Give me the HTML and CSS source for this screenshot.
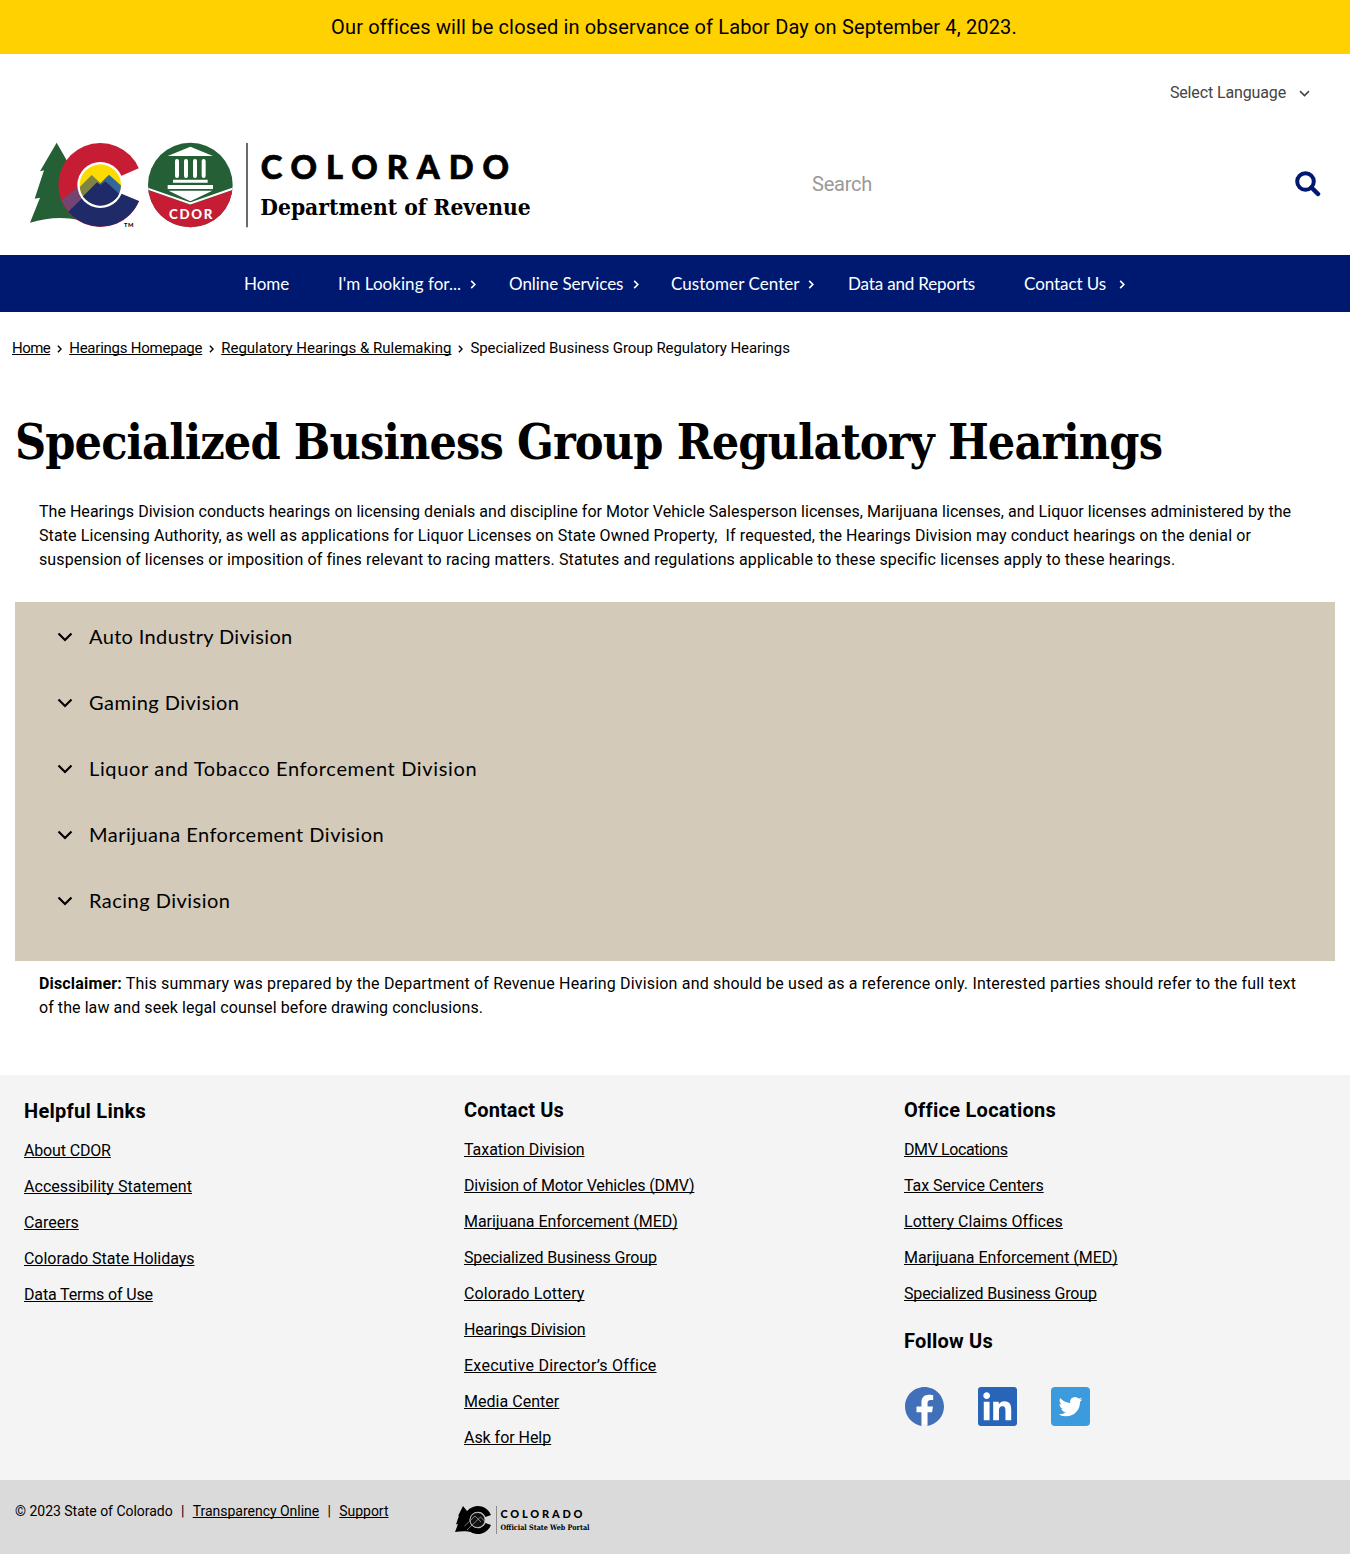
FILE: index.html
```html
<!DOCTYPE html>
<html lang="en">
<head>
<meta charset="utf-8">
<title>Specialized Business Group Regulatory Hearings | Department of Revenue</title>
<link rel="stylesheet" href="styles.css">
</head>
<body>
<svg width="0" height="0" class="defs" aria-hidden="true">
  <symbol id="right" viewBox="0 0 6 10"><path d="M1 1l4 4-4 4" fill="none" stroke="currentColor" stroke-width="1.8"/></symbol>
  <symbol id="down" viewBox="0 0 16 10"><path d="M1.5 1.5L8 8l6.500-6.500" fill="none" stroke="currentColor" stroke-width="2.200"/></symbol>
</svg>

<div class="alert">Our offices will be closed in observance of Labor Day on September 4, 2023.</div>

<header class="header">
  <div class="language"><span>Select Language</span><svg class="language-icon"><use href="#down"/></svg></div>
  <div class="brand-row">
    <svg class="logo" viewBox="30 36 1506 264" role="img" aria-label="Colorado Department of Revenue">
      <path fill="#245f36" d="M110 38L141 92 150 240 178 270C132 260 82 262 30 278L60 203 44 206 72 121 60 124Z"/>
      <circle cx="241" cy="165" r="126" fill="#c61d34"/>
      <path fill="#744573" d="M124 211L182 166 200 200 146 244A126 126 0 0 1 124 211Z"/>
      <path fill="#1f2a69" d="M145 245L214 178 300 183 357 213A126 126 0 0 1 145 245Z"/>
      <path fill="#fff" d="M241 165L370 109V218Z"/>
      <circle cx="241" cy="165" r="69" fill="#fff"/>
      <clipPath id="disc"><circle cx="241" cy="165" r="62"/></clipPath>
      <g clip-path="url(#disc)">
        <path fill="#fedb00" d="M170 90h140v140H170z"/>
        <path fill="#336799" d="M230 170L267 134 320 182V215H240Z"/>
        <path fill="#7f8442" d="M165 185L215 135 242 160 180 215Z"/>
        <path fill="#1f2a69" d="M178 210L231 157 242 165 256 154 310 203V240H178Z"/>
      </g>
      <text x="312" y="291" class="logo-sans" font-size="17" textLength="28">TM</text>

      <clipPath id="seal"><circle cx="511" cy="165" r="127"/></clipPath>
      <g clip-path="url(#seal)">
        <path fill="#245f36" d="M380 30h262v270H380z"/>
        <path fill="#c61d34" d="M380 178L511 224 642 178V300H380Z"/>
        <path fill="none" stroke="#fff" stroke-width="6" d="M380 175L511 220 642 175"/>
      </g>
      <path fill="#fff" d="M511 50L579 78H443ZM443 165H579V177H443ZM446 182H577L511 214Z"/>
      <path stroke="#fff" stroke-width="12" stroke-linecap="round" d="M471 93V138M498 93V138M525 93V138M551 93V138"/>
      <path stroke="#fff" stroke-width="9" d="M459 154H563"/>
      <text x="447" y="266" class="logo-sans white" font-size="40" textLength="130">CDOR</text>

      <path stroke="#222" stroke-width="4" d="M681 39V292"/>
      <text x="722" y="147" class="logo-sans name" font-size="98" textLength="745">COLORADO</text>
      <text x="721" y="255" class="logo-slab" font-size="66" textLength="811" lengthAdjust="spacingAndGlyphs">Department of Revenue</text>
    </svg>
    <div class="search">
      <span>Search</span>
      <svg class="search-icon" viewBox="0 0 26 26"><circle cx="10.500" cy="10.500" r="8.300" fill="none" stroke="#001970" stroke-width="4"/><path d="M16.500 16.500L23 23" stroke="#001970" stroke-width="4.500" stroke-linecap="round"/></svg>
    </div>
  </div>
</header>

<nav class="nav">
  <ul class="nav-list">
    <li>Home</li>
    <li class="wide">I'm Looking for...<svg><use href="#right"/></svg></li>
    <li class="online">Online Services<svg><use href="#right"/></svg></li>
    <li class="customer">Customer Center<svg><use href="#right"/></svg></li>
    <li class="tight">Data and Reports</li>
    <li>Contact Us<svg><use href="#right"/></svg></li>
  </ul>
</nav>

<div class="crumbs">
  <a class="crumb-home">Home</a><svg><use href="#right"/></svg><a class="crumb-tight">Hearings Homepage</a><svg><use href="#right"/></svg><a>Regulatory Hearings &amp; Rulemaking</a><svg><use href="#right"/></svg><span class="crumb-current">Specialized Business Group Regulatory Hearings</span>
</div>

<main class="main">
  <h1>Specialized Business Group Regulatory Hearings</h1>
  <p class="intro">The Hearings Division conducts hearings on licensing denials and discipline for Motor Vehicle Salesperson licenses, Marijuana licenses, and Liquor licenses administered by the<br><span class="loose">State Licensing Authority, as well as applications for Liquor Licenses on State Owned Property,&nbsp; If requested, the Hearings Division may conduct hearings on the denial or<br>suspension of licenses or imposition of fines relevant to racing matters. Statutes and regulations applicable to these specific licenses apply to these hearings.</span></p>
  <div class="accordion">
    <div class="item"><svg><use href="#down"/></svg><span class="auto">Auto Industry Division</span></div>
    <div class="item"><svg><use href="#down"/></svg><span>Gaming Division</span></div>
    <div class="item looser"><svg><use href="#down"/></svg><span>Liquor and Tobacco Enforcement Division</span></div>
    <div class="item"><svg><use href="#down"/></svg><span>Marijuana Enforcement Division</span></div>
    <div class="item"><svg><use href="#down"/></svg><span>Racing Division</span></div>
  </div>
  <p class="disclaimer"><strong>Disclaimer:</strong> This summary was prepared by the Department of Revenue Hearing Division and should be used as a reference only. Interested parties should refer to the full text<br><span class="loose">of the law and seek legal counsel before drawing conclusions.</span></p>
</main>

<footer class="footer">
  <section class="first">
    <h2>Helpful Links</h2>
    <ul>
      <li><a class="tight">About CDOR</a></li>
      <li><a class="open">Accessibility Statement</a></li>
      <li><a>Careers</a></li>
      <li><a>Colorado State Holidays</a></li>
      <li><a class="tight">Data Terms of Use</a></li>
    </ul>
  </section>
  <section>
    <h2 class="snug">Contact Us</h2>
    <ul>
      <li><a>Taxation Division</a></li>
      <li><a class="tight">Division of Motor Vehicles (DMV)</a></li>
      <li><a>Marijuana Enforcement (MED)</a></li>
      <li><a class="tight">Specialized Business Group</a></li>
      <li><a class="lottery">Colorado Lottery</a></li>
      <li><a class="tight">Hearings Division</a></li>
      <li><a class="director">Executive Director’s Office</a></li>
      <li><a class="open">Media Center</a></li>
      <li><a>Ask for Help</a></li>
    </ul>
  </section>
  <section>
    <h2>Office Locations</h2>
    <ul>
      <li><a class="dmv">DMV Locations</a></li>
      <li><a>Tax Service Centers</a></li>
      <li><a class="open">Lottery Claims Offices</a></li>
      <li><a>Marijuana Enforcement (MED)</a></li>
      <li><a class="tight">Specialized Business Group</a></li>
    </ul>
    <h2 class="follow">Follow Us</h2>
    <div class="social">
      <svg viewBox="0 0 24 24"><circle cx="12" cy="12" r="11" fill="#fff"/><path fill="#4170b9" d="M24 12.073c0-6.627-5.373-12-12-12s-12 5.373-12 12c0 5.990 4.388 10.954 10.125 11.854v-8.385H7.078v-3.470h3.047V9.430c0-3.007 1.792-4.669 4.533-4.669 1.312 0 2.686.235 2.686.235v2.953H15.830c-1.491 0-1.956.925-1.956 1.874v2.250h3.328l-.532 3.470h-2.796v8.385C19.612 23.027 24 18.062 24 12.073z"/></svg>
      <svg viewBox="0 0 24 24"><path fill="#fff" d="M2 2h20v20H2z"/><path fill="#2864b7" d="M20.447 20.452h-3.554v-5.569c0-1.328-.027-3.037-1.852-3.037-1.853 0-2.136 1.445-2.136 2.939v5.667H9.351V9h3.414v1.561h.046c.477-.9 1.637-1.850 3.370-1.850 3.601 0 4.267 2.370 4.267 5.455v6.286zM5.337 7.433c-1.144 0-2.063-.926-2.063-2.065 0-1.138.92-2.063 2.063-2.063 1.140 0 2.064.925 2.064 2.063 0 1.139-.925 2.065-2.064 2.065zm1.782 13.019H3.555V9h3.564v11.452zM22.225 0H1.771C.792 0 0 .774 0 1.729v20.542C0 23.227.792 24 1.771 24h20.451C23.200 24 24 23.227 24 22.271V1.729C24 .774 23.200 0 22.222 0h.003z"/></svg>
      <svg viewBox="0 0 24 24"><rect width="24" height="24" rx="2.500" fill="#3b9bdc"/><path fill="#fff" transform="translate(4.700 4.800) scale(.61)" d="M23.953 4.570a10 10 0 01-2.825.775 4.958 4.958 0 002.163-2.723c-.951.555-2.005.959-3.127 1.184a4.920 4.920 0 00-8.384 4.482C7.690 8.095 4.067 6.130 1.640 3.162a4.822 4.822 0 00-.666 2.475c0 1.710.870 3.213 2.188 4.096a4.904 4.904 0 01-2.228-.616v.06a4.923 4.923 0 003.946 4.827 4.996 4.996 0 01-2.212.085 4.936 4.936 0 004.604 3.417 9.867 9.867 0 01-6.102 2.105c-.39 0-.779-.023-1.170-.067a13.995 13.995 0 007.557 2.209c9.053 0 13.998-7.496 13.998-13.985 0-.21 0-.42-.015-.63A9.935 9.935 0 0024 4.590z"/></svg>
    </div>
  </section>
</footer>

<div class="legal">
  <div class="legal-links"><span>© 2023 State of Colorado</span><i>|</i><a>Transparency Online</a><i>|</i><a>Support</a></div>
  <svg class="portal" viewBox="0 0 140 30" role="img" aria-label="Colorado Official State Web Portal">
    <path d="M8 1l4 5 1 16 3 5c-4-1-10-1-16 0l3-8-2 .5 3-9-1 .5z"/>
    <path d="M36 10A14 14 0 1 0 36 20L30.500 18A8.200 8.200 0 1 1 30.500 12Z"/>
    <circle cx="22.500" cy="15" r="7.500" fill="#111" stroke="#ccc" stroke-width=".7"/>
    <path fill="none" stroke="#ccc" stroke-width=".6" d="M9.500 21L20 11l6 6M12 25L25.500 12l4 4"/>
    <path stroke="#777" stroke-width=".8" d="M41.500 1v28"/>
    <text x="45.500" y="13" class="logo-sans" font-size="11" textLength="82">COLORADO</text>
    <text x="45.500" y="25" class="logo-slab" font-size="7.500" textLength="89" lengthAdjust="spacingAndGlyphs">Official State Web Portal</text>
  </svg>
</div>
</body>
</html>
```
FILE: styles.css
```css
* { box-sizing: border-box; }
body { margin: 0; background: #fff; color: #000; font: 16px/24px Roboto, "Open Sans", sans-serif; letter-spacing: 0; }
ul { list-style: none; margin: 0; padding: 0; }
a { text-decoration: underline; text-underline-offset: 1px; text-decoration-thickness: 1px; text-decoration-skip-ink: none; }
.defs { display: block; }

.alert { height: 54px; padding-right: 2px; background: #ffd100; text-align: center; font-size: 20px; line-height: 54px; letter-spacing: .15px; }

.header { height: 201px; padding: 27px 30px 0; }
.language { display: flex; justify-content: flex-end; align-items: center; gap: 13px; padding-right: 10px; color: #444; letter-spacing: -.13px; }
.language-icon { width: 11px; height: 7px; }
.brand-row { display: flex; justify-content: space-between; align-items: flex-start; padding-top: 37px; }
.logo { width: 502px; height: 88px; }
.logo-sans { font-family: Lato, sans-serif; font-weight: 900; }
.logo-slab { font-family: "DejaVu Serif Condensed", "DejaVu Serif", serif; font-stretch: condensed; font-weight: 700; }
.name { stroke: #000; stroke-width: 2; }
.white { fill: #fff; }
.search { display: flex; justify-content: space-between; align-items: center; width: 508px; height: 84px; color: #999; font-size: 20px; letter-spacing: -.24px; }
.search-icon { width: 26px; height: 26px; margin-right: -1px; }

.nav { height: 57px; background: #001970; color: #fff; }
.nav-list { display: grid; grid-template-columns: 94px 171px 162px 177px 176px 130px; width: 910px; margin: 0 auto; font-family: Lato, sans-serif; font-size: 17px; line-height: 57px; letter-spacing: -.06px; }
.nav-list li { display: flex; align-items: center; justify-content: space-between; padding-left: 24px; padding-right: 8px; white-space: nowrap; }
.nav-list svg { width: 6px; height: 9px; margin-top: 2px; }
.nav-list .wide { letter-spacing: .05px; padding-right: 9px; }
.nav-list .customer { letter-spacing: .06px; padding-right: 10px; }
.nav-list .tight { letter-spacing: -.16px; }
.nav-list li:last-child { padding-right: 5px; }

.crumbs { display: flex; align-items: center; height: 72px; padding-left: 12px; font-size: 15px; }
.crumbs svg { width: 5px; height: 8px; margin: 1px 7px 0; }
.crumb-home { letter-spacing: -.55px; }
.crumb-tight { letter-spacing: -.235px; }
.crumb-current { letter-spacing: -.085px; }

.main { padding: 28px 15px 0; height: 691px; white-space: nowrap; }
h1 { margin: 0; font: 700 48px/61px "DejaVu Serif Condensed", "DejaVu Serif", serif; font-stretch: condensed; letter-spacing: -.89px; }
.intro { margin: 27px 24px 30px; letter-spacing: .028px; }
.intro .loose { letter-spacing: .105px; }
.accordion { height: 359px; padding: 2px 0 0 42px; background: #d3cab9; font-family: Lato, sans-serif; font-size: 20px; letter-spacing: .48px; }
.item { display: flex; align-items: center; gap: 16px; height: 66px; }
.item svg { width: 16px; height: 10px; }
.item span { margin-top: -2px; }
.item .auto { letter-spacing: .35px; }
.looser { letter-spacing: .65px; }
.disclaimer { margin: 11px 24px 0; letter-spacing: .17px; }
.disclaimer .loose { letter-spacing: .071px; }

.footer { display: grid; grid-template-columns: 440px 440px 1fr; height: 405px; padding: 23px 24px 0; background: #f4f4f4; }
.footer h2 { margin: 0 0 16px; font-size: 20px; line-height: 24px; font-weight: 700; letter-spacing: .275px; }
.footer .snug { letter-spacing: .13px; }
.footer li { height: 36px; letter-spacing: -.04px; }
.footer .first { padding-top: 1px; }
.footer .open { letter-spacing: .033px; }
.footer .lottery { letter-spacing: .14px; }
.footer .director { letter-spacing: .26px; }
.footer .tight { letter-spacing: -.155px; }
.footer .dmv { letter-spacing: -.4px; }
.footer .follow { margin: 11px 0 34px; letter-spacing: .21px; }
.social { display: flex; gap: 34px; padding-left: 1px; }
.social svg { width: 39px; height: 39px; }

.legal { display: flex; align-items: flex-start; gap: 67px; height: 74px; padding: 19px 15px 0; background: #dadada; }
.legal-links { display: flex; font-size: 14px; letter-spacing: -.02px; }
.legal-links i { width: 20px; text-align: center; font-style: normal; }
.portal { width: 140px; height: 30px; margin-top: 6px; }
```
